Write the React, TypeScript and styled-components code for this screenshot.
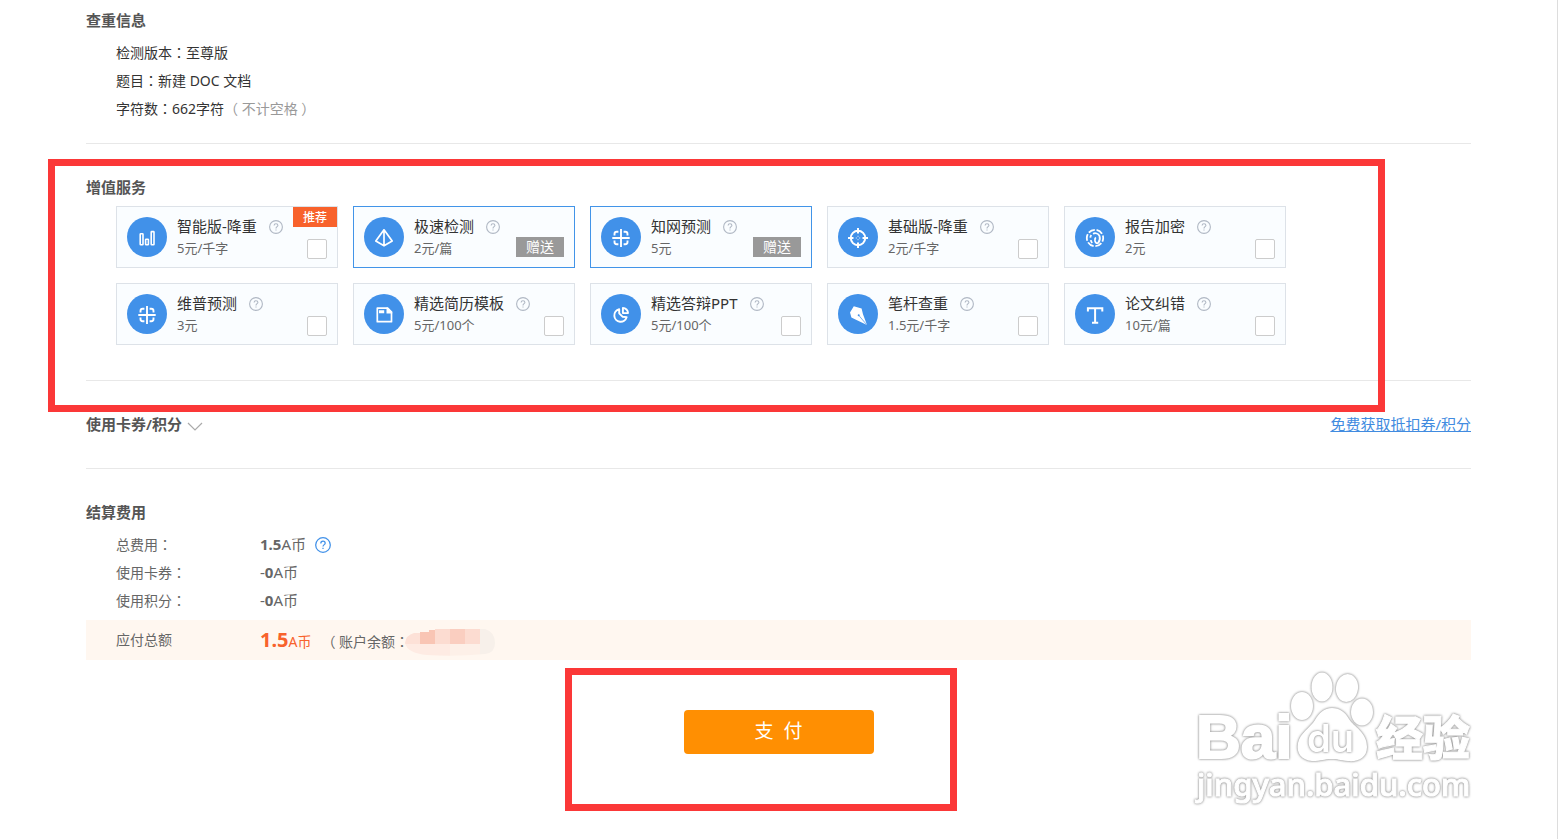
import React from 'react';
import styled, { createGlobalStyle } from 'styled-components';

const sans = '"Noto Sans", "Noto Sans CJK SC", sans-serif';

const GlobalStyle = createGlobalStyle`
  * { box-sizing: border-box; }
  body {
    margin: 0;
    background: #fff;
    color: #333;
    font: 14px/28px ${sans};
  }
  p, h2, dl, dd { margin: 0; }
`;

const Page = styled.main`
  position: relative;
  min-height: 100vh;
  padding: 6px 86px 0;
  border-right: 1px solid #ddd;
`;

const Section = styled.section<{ $top?: number; $bottom?: number; $last?: boolean }>`
  position: relative;
  padding-top: ${p => p.$top ?? 29}px;
  padding-bottom: ${p => p.$bottom ?? 30}px;
  border-bottom: ${p => (p.$last ? 'none' : '1px solid #e8e8e8')};
`;

const Title = styled.h2`
  margin-bottom: 5px;
  color: #555;
  font-size: 15px;
  line-height: 28px;
  font-weight: 600;
`;

const Line = styled.p`
  padding-left: 30px;
`;

/* full-width colon drawn in the middle of its cell */
const Colon = styled.span`
  font-family: "Noto Sans CJK TC", sans-serif;
  line-height: 1;
`;

const Muted = styled.span`
  color: #999;
`;

const CardGrid = styled.div`
  display: grid;
  grid-template-columns: repeat(auto-fill, 222px);
  gap: 15px;
  padding-left: 30px;
`;

const Card = styled.div<{ $chosen?: boolean }>`
  position: relative;
  display: flex;
  align-items: center;
  gap: 10px;
  height: 62px;
  padding: 8px 10px;
  border: 1px solid ${p => (p.$chosen ? '#4294e8' : '#dde2e8')};
  background: #fafdff;
`;

const Disc = styled.svg`
  flex: none;
  width: 40px;
  height: 40px;
  border-radius: 50%;
  background: #4191e9;
  fill: none;
  stroke: #fff;
  stroke-width: 1.9;
`;

const CardText = styled.div`
  flex: 1;
  white-space: nowrap;
`;

const NameRow = styled.div`
  display: flex;
  align-items: center;
  gap: 12px;
  font-size: 15px;
  line-height: 23px;
`;

const Price = styled.div`
  color: #666;
  font-size: 13px;
  line-height: 21px;
`;

const Check = styled.input`
  appearance: none;
  flex: none;
  align-self: flex-end;
  width: 20px;
  height: 20px;
  margin: 0;
  border: 1px solid #ccc;
  border-radius: 2px;
  background: #fff;
  &:checked { background: #4191e9; }
`;

const Gift = styled.span`
  align-self: flex-end;
  margin-bottom: 2px;
  padding: 0 10px;
  background: #999;
  color: #fff;
  line-height: 20px;
`;

const Recommend = styled.span`
  position: absolute;
  top: 0;
  right: 0;
  height: 20px;
  padding: 0 10px;
  background: #f8622c;
  color: #fff;
  font-size: 12px;
  font-weight: 500;
  line-height: 22px;
`;

const HelpButton = styled.button<{ $size: number; $color: string }>`
  display: flex;
  width: ${p => p.$size}px;
  height: ${p => p.$size}px;
  padding: 0;
  border: 0;
  background: none;
  color: ${p => p.$color};
  cursor: pointer;
`;

const Between = styled.div`
  display: flex;
  align-items: center;
  justify-content: space-between;
`;

const Toggle = styled.button`
  display: flex;
  align-items: center;
  gap: 5px;
  padding: 0;
  border: 0;
  background: none;
  color: #555;
  font: 600 15px/28px ${sans};
  cursor: pointer;
`;

const Chevron = styled.svg`
  margin-top: 4px;
`;

const CouponLink = styled.a`
  color: #418be0;
  font-size: 15px;
`;

const Fees = styled.dl`
  color: #666;
`;

const FeeRow = styled.div`
  display: flex;
  align-items: center;
  height: 28px;
  padding-left: 30px;
  dt { width: 144px; }
  dd { display: flex; align-items: center; gap: 9px; font-size: 15px; }
`;

const Amount = styled.span`
  padding-bottom: 2px;
  line-height: 26px;
`;

const TotalRow = styled(FeeRow)`
  height: 40px;
  margin-top: 5px;
  background: #fff7f0;
  dd { gap: 10px; align-items: baseline; font-size: 14px; padding-top: 2px; }
`;

const Due = styled.span`
  color: #f8622c;
  b { font-size: 20px; }
`;

const Balance = styled.span`
  display: flex;
  align-items: center;
`;

const Mosaic = styled.svg`
  width: 90px;
  height: 27px;
  margin-left: -4px;
`;

const PayArea = styled.div`
  position: relative;
  display: flex;
  justify-content: center;
  padding: 50px 0 57px;
`;

const PayButton = styled.button`
  width: 190px;
  height: 44px;
  padding: 0 0 2px;
  border: 0;
  border-radius: 4px;
  background: #ff8f02;
  color: #fff;
  font: 19px/42px ${sans};
  cursor: pointer;
`;

const ServicesFrame = styled.div`
  position: absolute;
  inset: 15px 86px -32px -38px;
  border: 7px solid #fb3838;
  pointer-events: none;
`;

const PayFrame = styled.div`
  position: absolute;
  top: 8px;
  left: calc(50% - 214px);
  width: 392px;
  height: 143px;
  border: 7px solid #fb3838;
  pointer-events: none;
`;

const Watermark = styled.svg`
  position: absolute;
  right: 76px;
  bottom: 29px;
  width: 290px;
  height: 144px;
  overflow: visible;
  fill: #fff;
  pointer-events: none;
`;

const Raised = styled.g<{ $stroke?: number }>`
  stroke: #fff;
  stroke-width: ${p => p.$stroke ?? 0};
  filter: drop-shadow(0 0 1px #8c8c8c) drop-shadow(0 0 1px #d4d4d4);
`;

function Help({ size = 14, color = '#b0b8c4' }: { size?: number; color?: string }) {
  return (
    <HelpButton type="button" aria-label="帮助" $size={size} $color={color}>
      <svg width={size} height={size} viewBox="0 0 14 14" fill="none" stroke="currentColor" strokeWidth="1.1">
        <circle cx="7" cy="7" r="6.4" />
        <path d="M5.1 5.6C5.1 4.3 5.9 3.7 7 3.7s1.9.7 1.9 1.7C8.9 6.7 7 6.7 7 8.4M7 9.4v1.2" />
      </svg>
    </HelpButton>
  );
}

const icons: Record<string, React.ReactNode> = {
  bars: (
    <g strokeWidth="1.6">
      <rect x="13.2" y="16.8" width="2.8" height="11" rx=".6" />
      <rect x="18.6" y="22.2" width="2.8" height="5.6" rx=".6" />
      <rect x="24.2" y="14.6" width="2.8" height="13.2" rx=".6" />
    </g>
  ),
  pyramid: <path d="M20 12.8 11.8 24 20 28.8 28.2 24ZM20 12.8v16" strokeWidth="1.7" strokeLinejoin="round" />,
  target: (
    <>
      <path d="M20 12v18M11.3 21h17.4" />
      <path d="M13.5 18.6v-1.6a2.2 2.2 0 0 1 2.2-2.2h1.7M22.6 14.8h1.7a2.2 2.2 0 0 1 2.2 2.2v1.6M26.5 23.4v1.6a2.2 2.2 0 0 1-2.2 2.2h-1.7M17.4 27.2h-1.7a2.2 2.2 0 0 1-2.2-2.2v-1.6" />
    </>
  ),
  doc: (
    <>
      <path d="M13.3 14.2h10.2l4 4v9.5h-14.2Z" strokeWidth="1.7" strokeLinejoin="round" />
      <path d="M22.5 13.5h1.5l4.2 4.2v1.8h-5.7Z" fill="#fff" stroke="none" />
      <path d="M15 16.3h5.2v2.9H15Z" fill="#fff" stroke="none" />
    </>
  ),
  pie: (
    <>
      <path d="M18.2 15.3a6.3 6.3 0 1 0 7.5 7.8l-4.2-.4-3.3-3.4Z" strokeLinejoin="round" />
      <path d="M21.9 14v5.1H27A5.1 5.1 0 0 0 21.9 14Z" strokeLinejoin="round" />
    </>
  ),
  cross: (
    <>
      <circle cx="20" cy="21" r="7.2" strokeWidth="2" />
      <path d="M20 11v5.5M20 25.5V31M10 21h5.5M24.5 21H30" strokeWidth="2" />
      <path d="M18.2 21h.1M21.7 21h.1M20 19.2v.1M20 22.7v.1" strokeLinecap="round" strokeWidth="1" />
    </>
  ),
  finger: (
    <g strokeWidth="1.8">
      <circle cx="20" cy="21" r="8.2" strokeDasharray="6.8 1.8" strokeDashoffset="3" />
      <path d="M17.2 26a6 6 0 0 1-1.4-2.9M15.3 20.6a5 5 0 0 1 1-2.6M18 16.7a5 5 0 0 1 6.5 2.2c.8 2.5.3 5-1.3 6.9-1.4 1-2.9-.1-3.2-1.9-.2-1.5-.3-2.6.8-3.6" />
    </g>
  ),
  pen: (
    <>
      <path d="M15.8 12.3 23.6 14.6 25 20.2 29 31 18.5 26 13.4 23.6 12 18.5Z" fill="#fff" stroke="none" />
      <circle cx="20.7" cy="21.3" r="1" fill="#4191e9" stroke="none" />
      <path d="m20.7 21.3 8 9.4" stroke="#4191e9" strokeWidth=".7" />
    </>
  ),
  type: <path d="M12.9 17.5v-3.2h14.4v3.2M20.1 14.3v14.4M17 28.7h6.2" strokeWidth="2" />,
};

type Service = { name: string; price: string; icon: string; gift?: boolean; recommended?: boolean };

const services: Service[] = [
  { name: '智能版-降重', price: '5元/千字', icon: 'bars', recommended: true },
  { name: '极速检测', price: '2元/篇', icon: 'pyramid', gift: true },
  { name: '知网预测', price: '5元', icon: 'target', gift: true },
  { name: '基础版-降重', price: '2元/千字', icon: 'cross' },
  { name: '报告加密', price: '2元', icon: 'finger' },
  { name: '维普预测', price: '3元', icon: 'target' },
  { name: '精选简历模板', price: '5元/100个', icon: 'doc' },
  { name: '精选答辩PPT', price: '5元/100个', icon: 'pie' },
  { name: '笔杆查重', price: '1.5元/千字', icon: 'pen' },
  { name: '论文纠错', price: '10元/篇', icon: 'type' },
];

function ServiceCard({ service, id }: { service: Service; id: string }) {
  return (
    <Card $chosen={service.gift}>
      <Disc viewBox="0 0 40 40" aria-hidden="true">{icons[service.icon]}</Disc>
      <CardText>
        <NameRow>
          {service.gift ? <span>{service.name}</span> : <label htmlFor={id}>{service.name}</label>}
          <Help />
        </NameRow>
        <Price>{service.price}</Price>
      </CardText>
      {service.gift ? <Gift>赠送</Gift> : <Check type="checkbox" id={id} />}
      {service.recommended && <Recommend>推荐</Recommend>}
    </Card>
  );
}

export default function App() {
  return (
    <>
      <GlobalStyle />
      <Page>
        <Section $top={0} $bottom={20}>
          <Title>查重信息</Title>
          <Line>检测版本<Colon>：</Colon>至尊版</Line>
          <Line>题目<Colon>：</Colon>新建 DOC 文档</Line>
          <Line>字符数<Colon>：</Colon>662字符<Muted>（ 不计空格 ）</Muted></Line>
        </Section>

        <Section $bottom={35}>
          <Title>增值服务</Title>
          <CardGrid>
            {services.map((s, i) => <ServiceCard key={s.name} service={s} id={`service-${i}`} />)}
          </CardGrid>
          <ServicesFrame />
        </Section>

        <Section>
          <Between>
            <Toggle type="button">
              使用卡券/积分
              <Chevron width="16" height="10" viewBox="0 0 16 10" fill="none" stroke="#aaa" strokeWidth="1.2">
                <path d="M1 2l7 7 7-7" />
              </Chevron>
            </Toggle>
            <CouponLink href="#coupons">免费获取抵扣券/积分</CouponLink>
          </Between>
        </Section>

        <Section $bottom={0} $last>
          <Title>结算费用</Title>
          <Fees>
            <FeeRow>
              <dt>总费用<Colon>：</Colon></dt>
              <dd><Amount><b>1.5</b>A币</Amount><Help size={16} color="#4191e9" /></dd>
            </FeeRow>
            <FeeRow>
              <dt>使用卡券<Colon>：</Colon></dt>
              <dd><Amount>-<b>0</b>A币</Amount></dd>
            </FeeRow>
            <FeeRow>
              <dt>使用积分<Colon>：</Colon></dt>
              <dd><Amount>-<b>0</b>A币</Amount></dd>
            </FeeRow>
            <TotalRow>
              <dt>应付总额</dt>
              <dd>
                <Due><b>1.5</b>A币</Due>
                <Balance>
                  <span>（ 账户余额<Colon>：</Colon></span>
                  <Mosaic viewBox="0 0 90 27" aria-hidden="true">
                    <clipPath id="smudge">
                      <path d="M0 14Q1 6 9 4H15V3H24V1H30V0H80Q90 3 90 14Q90 24 80 25Q50 28 22 26Q2 24 0 14Z" />
                    </clipPath>
                    <g clipPath="url(#smudge)">
                      <path fill="#fde1d7" d="M0 0h15v15H0z" />
                      <path fill="#f9c5b4" d="M15 0h15v15H15z" />
                      <path fill="#fcdcd1" d="M30 0h15v15H30zM60 0h15v15H60z" />
                      <path fill="#facec0" d="M45 0h15v15H45z" />
                      <path fill="#f7f0ea" d="M75 0h15v27H75z" />
                      <path fill="#feebe3" d="M0 15h45v12H0z" />
                      <path fill="#fdf0e8" d="M45 15h30v12H45z" />
                    </g>
                  </Mosaic>
                </Balance>
              </dd>
            </TotalRow>
          </Fees>
        </Section>

        <PayArea>
          <PayButton type="button">支&nbsp;&nbsp;付</PayButton>
          <PayFrame />
        </PayArea>

        <Watermark viewBox="0 0 290 144">
          <Raised $stroke={2}>
            <text x="5" y="92" fontFamily="Liberation Sans, sans-serif" fontWeight="700" fontSize="62">Bai</text>
          </Raised>
          <Raised $stroke={1}>
            <text x="185" y="89" fontFamily="Noto Sans CJK SC, sans-serif" fontWeight="900" fontSize="47">经验</text>
            <text x="6" y="130" fontFamily="Noto Sans, sans-serif" fontWeight="500" fontSize="31">jingyan.baidu.com</text>
          </Raised>
          <Raised>
            <path d="M141 42C149 42 154 46 158 53C163 61 176 66 176 81C176 92 167 96 157 95C148 94 147 93 140 93C133 93 131 95 121 95C111 94 105 88 107 77C109 67 119 62 124 54C128 47 133 42 141 42Z" />
            <ellipse cx="111" cy="40" rx="11" ry="14" />
            <ellipse cx="131" cy="21" rx="10.5" ry="14.5" />
            <ellipse cx="156" cy="22" rx="11" ry="14" transform="rotate(8 156 22)" />
            <ellipse cx="171" cy="46" rx="11" ry="13.5" />
          </Raised>
          <Raised>
            <text x="116" y="86" fontFamily="Inter, sans-serif" fontWeight="600" fontSize="38">du</text>
          </Raised>
        </Watermark>
      </Page>
    </>
  );
}
